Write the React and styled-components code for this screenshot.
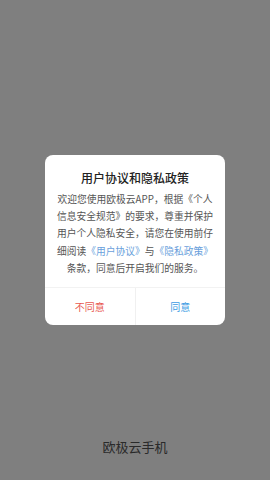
import React from "react";
import styled, { createGlobalStyle } from "styled-components";

const Global = createGlobalStyle`
  html, body { margin: 0; padding: 0; }
  body { font-family: "Noto Sans CJK SC", "Noto Sans", sans-serif; }
  #root { width: 270px; height: 480px; }
`;

const Page = styled.div`
  position: relative;
  width: 270px;
  height: 480px;
  background: #fff;
  display: flex;
  flex-direction: column;
  justify-content: flex-end;
  align-items: center;
  overflow: hidden;
`;

const AppName = styled.div`
  font-size: 13px;
  line-height: 18px;
  color: #555;
  margin-bottom: 24px;
`;

const Overlay = styled.div`
  position: absolute;
  inset: 0;
  background: rgba(0, 0, 0, 0.5);
  display: flex;
  align-items: center;
  justify-content: center;
`;

const Dialog = styled.div`
  width: 180px;
  background: #fff;
  border-radius: 8px;
  display: flex;
  flex-direction: column;
  overflow: hidden;
`;

const Title = styled.div`
  padding-top: 13px;
  font-size: 12px;
  line-height: 20px;
  font-weight: 500;
  color: #222;
  text-align: center;
`;

const Body = styled.div`
  margin-top: 3px;
  padding: 0 11px;
  font-size: 9.75px;
  line-height: 17.25px;
  color: #555;
  text-align: center;
`;

const Link = styled.span`
  color: #6a9fdc;
`;

const Buttons = styled.div`
  margin-top: 10px;
  display: flex;
  border-top: 1px solid #f2f2f2;
`;

const Button = styled.div`
  flex: 1;
  height: 37px;
  display: flex;
  align-items: center;
  justify-content: center;
  font-size: 10px;
  color: ${(p) => p.$color};
  & + & { border-left: 1px solid #f0f0f0; }
`;

export default function App() {
  return (
    <>
      <Global />
      <Page>
        <AppName>欧极云手机</AppName>
        <Overlay>
          <Dialog>
            <Title>用户协议和隐私政策</Title>
            <Body>
              欢迎您使用欧极云APP，根据《个人信息安全规范》的要求，尊重并保护用户个人隐私安全，请您在使用前仔细阅读
              <Link>《用户协议》</Link>与<Link>《隐私政策》</Link>
              条款，同意后开启我们的服务。
            </Body>
            <Buttons>
              <Button $color="#e8584f">不同意</Button>
              <Button $color="#3d9be3">同意</Button>
            </Buttons>
          </Dialog>
        </Overlay>
      </Page>
    </>
  );
}
